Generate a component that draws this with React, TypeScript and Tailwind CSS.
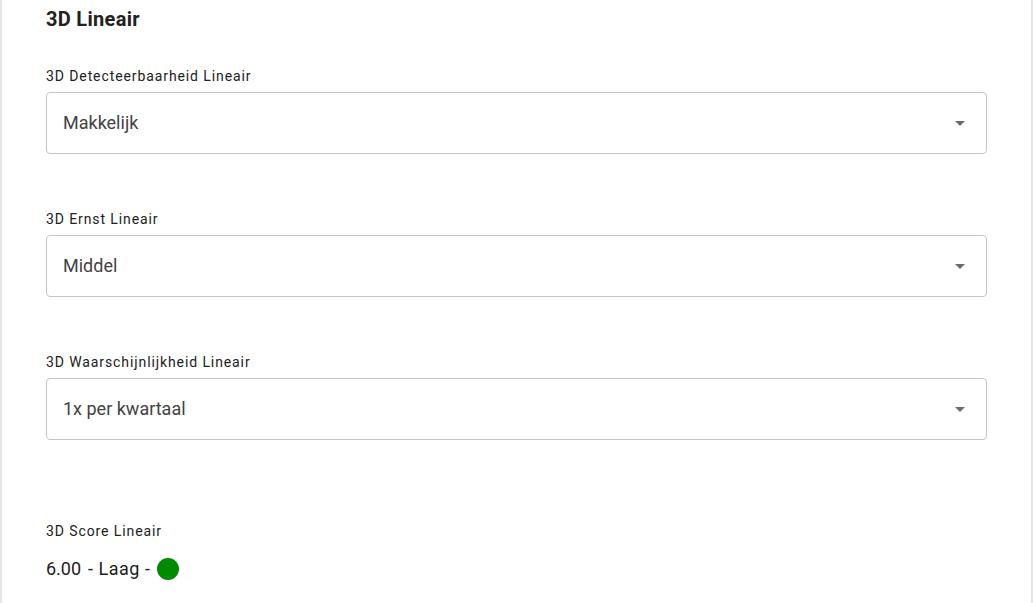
const options = [
  { label: "3D Detecteerbaarheid Lineair", value: "Makkelijk" },
  { label: "3D Ernst Lineair", value: "Middel" },
  { label: "3D Waarschijnlijkheid Lineair", value: "1x per kwartaal" },
];

function SelectField({ label, value }: { label: string; value: string }) {
  return (
    <div>
      <div className="text-[14px] leading-[20px] tracking-[0.9px] text-[#212121]">{label}</div>
      <div className="mt-[6px] h-[62px] w-[941px] rounded-[4px] border border-[#c4c4c4] flex items-center justify-between pl-[16px] pr-[21px]">
        <span className="mb-[1px] text-[18px] text-[#424242]">{value}</span>
        <svg width="10" height="5" viewBox="0 0 10 5" className="fill-[#6b6b6b]">
          <path d="M0 0h10L5 5z" />
        </svg>
      </div>
    </div>
  );
}

export default function App() {
  return (
    <div
      className="h-[603px] w-[1033px] bg-white border-l-2 border-r-2 border-[#e6e6e6] overflow-hidden"
      style={{ fontFamily: "Roboto, 'Liberation Sans', sans-serif" }}
    >
      <div className="flex flex-col pl-[44px] pt-[5px]">
        <h2 className="text-[20px] leading-[28px] font-bold tracking-[0.3px] text-[#212121]">3D Lineair</h2>
        <div className="mt-[33px] flex flex-col gap-[55px]">
          {options.map((o) => (
            <SelectField key={o.label} label={o.label} value={o.value} />
          ))}
        </div>
        <div className="mt-[81px]">
          <div className="text-[14px] leading-[20px] tracking-[0.9px] text-[#212121]">3D Score Lineair</div>
          <div className="mt-[16px] flex items-center text-[18px] leading-[24px] text-[#212121]">
            <span>6.00</span>
            <span className="ml-[7px] tracking-[0.5px]">- Laag -</span>
            <span className="ml-[7px] inline-block h-[22px] w-[22px] rounded-full bg-[#008a00]" />
          </div>
        </div>
      </div>
    </div>
  );
}
